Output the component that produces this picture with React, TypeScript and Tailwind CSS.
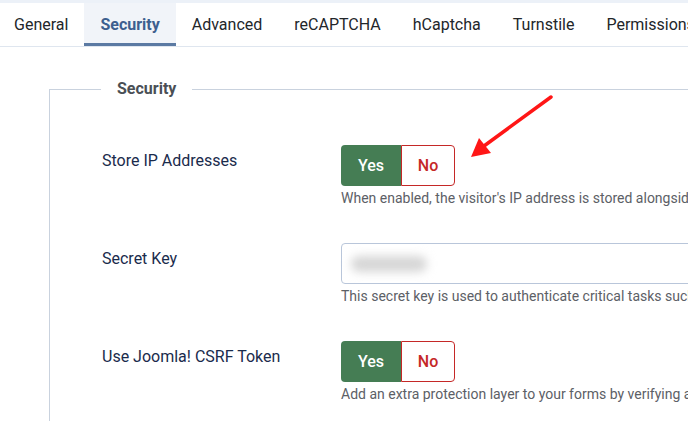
import React from 'react';

const tabs = ['General', 'Security', 'Advanced', 'reCAPTCHA', 'hCaptcha', 'Turnstile', 'Permissions'];

// Joomla style Yes / No radio switcher
const YesNo = () => (
  <div className="flex h-[41px] w-[114px] text-[16px] font-medium">
    <div className="flex w-[60px] items-center justify-center rounded-l-[4px] bg-[#457d54] text-white">Yes</div>
    <div className="flex flex-1 items-center justify-center rounded-r-[4px] border border-[#c52827] text-[#c52827]">No</div>
  </div>
);

const Row = ({ label, help, children }: { label: string; help: string; children: React.ReactNode }) => (
  <div className="flex">
    <div className="w-[239px] shrink-0 pt-[5px] text-[16px] leading-[22px] text-[#1a2b4c]">{label}</div>
    <div className="min-w-0 flex-1">
      {children}
      <p className="mt-[3px] whitespace-nowrap text-[14px] leading-[18px] text-[#5c6066]">{help}</p>
    </div>
  </div>
);

export default function App() {
  return (
    <div className="relative h-[421px] w-[688px] overflow-hidden bg-white" style={{ fontFamily: 'Roboto, "Noto Sans", sans-serif' }}>
      <div className="h-[3px] bg-[#ecf1f8]" />
      <nav className="flex h-[44px] -ml-[2px] whitespace-nowrap border-b border-[#dfe6ef] text-[16px] text-[#22262a]">
        {tabs.map((t) =>
          t === 'Security' ? (
            <div key={t} className="flex items-center border-b-[3px] border-[#5b7aa3] bg-[#f1f4f9] px-4 pt-[3px] font-bold text-[#3d5f8f]">
              {t}
            </div>
          ) : (
            <div key={t} className="flex items-center border-b-[3px] border-transparent px-4 pt-[3px]">{t}</div>
          )
        )}
      </nav>

      <fieldset className="ml-[49px] mt-[31px] w-[700px] border border-[#c9d2de] p-0 pb-12">
        <legend className="ml-[51px] px-4 text-[16px] font-bold leading-[22px] text-[#4a4f55]">Security</legend>
        <div className="flex flex-col gap-[36px] pl-[52px] pt-[45px]">
          <Row label="Store IP Addresses" help="When enabled, the visitor's IP address is stored alongside the submission.">
            <YesNo />
          </Row>
          <Row label="Secret Key" help="This secret key is used to authenticate critical tasks such as cron jobs.">
            <div className="flex h-[41px] w-[400px] items-center rounded-[4px] border border-[#b9c6da] pl-[9px]">
              <div className="h-[16px] w-[76px] rounded-full bg-[#d6d6d6] blur-[5px]" />
            </div>
          </Row>
          <Row label="Use Joomla! CSRF Token" help="Add an extra protection layer to your forms by verifying a Joomla! token.">
            <YesNo />
          </Row>
        </div>
      </fieldset>

      {/* annotation arrow */}
      <svg className="pointer-events-none absolute left-0 top-0" width="688" height="421">
        <line x1="551" y1="97" x2="484" y2="146" stroke="#ff1616" strokeWidth="3.5" strokeLinecap="round" />
        <polygon points="471,157 479,138 491,153" fill="#ff1616" />
      </svg>
    </div>
  );
}
